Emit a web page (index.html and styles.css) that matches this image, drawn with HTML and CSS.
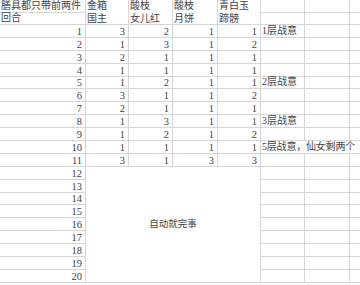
FILE: index.html
```html
<!DOCTYPE html>
<html lang="zh">
<head>
<meta charset="utf-8">
<link rel="stylesheet" href="styles.css">
</head>
<body>
<div class="sheet">
  <div class="c">膳具都只带前两件</div>
  <div class="c h2">金箱<br>国主</div>
  <div class="c h2">酸枝<br>女儿红</div>
  <div class="c h2">酸枝<br>月饼</div>
  <div class="c h2">青白玉<br>蹄髈</div>
  <div class="c"></div><div class="c"></div><div class="c last"></div>
  <div class="c">回合</div>
  <div class="c"></div><div class="c"></div><div class="c last"></div>

  <div class="c n">1</div><div class="c n">3</div><div class="c n">2</div><div class="c n">1</div><div class="c n">1</div><div class="c">1层战意</div><div class="c"></div><div class="c last"></div>
  <div class="c n">2</div><div class="c n">1</div><div class="c n">3</div><div class="c n">1</div><div class="c n">2</div><div class="c"></div><div class="c"></div><div class="c last"></div>
  <div class="c n">3</div><div class="c n">2</div><div class="c n">1</div><div class="c n">1</div><div class="c n">1</div><div class="c"></div><div class="c"></div><div class="c last"></div>
  <div class="c n">4</div><div class="c n">1</div><div class="c n">1</div><div class="c n">1</div><div class="c n">1</div><div class="c"></div><div class="c"></div><div class="c last"></div>
  <div class="c n">5</div><div class="c n">1</div><div class="c n">2</div><div class="c n">1</div><div class="c n">1</div><div class="c">2层战意</div><div class="c"></div><div class="c last"></div>
  <div class="c n">6</div><div class="c n">3</div><div class="c n">1</div><div class="c n">1</div><div class="c n">2</div><div class="c"></div><div class="c"></div><div class="c last"></div>
  <div class="c n">7</div><div class="c n">2</div><div class="c n">1</div><div class="c n">1</div><div class="c n">1</div><div class="c"></div><div class="c"></div><div class="c last"></div>
  <div class="c n">8</div><div class="c n">1</div><div class="c n">3</div><div class="c n">1</div><div class="c n">1</div><div class="c">3层战意</div><div class="c"></div><div class="c last"></div>
  <div class="c n">9</div><div class="c n">1</div><div class="c n">2</div><div class="c n">1</div><div class="c n">2</div><div class="c"></div><div class="c"></div><div class="c last"></div>
  <div class="c n">10</div><div class="c n">1</div><div class="c n">1</div><div class="c n">1</div><div class="c n">1</div><div class="c span3">5层战意，仙女剩两个</div>
  <div class="c n">11</div><div class="c n">3</div><div class="c n">1</div><div class="c n">3</div><div class="c n">3</div><div class="c"></div><div class="c"></div><div class="c last"></div>

  <div class="c n">12</div><div class="c merged">自动就完事</div><div class="c"></div><div class="c"></div><div class="c last"></div>
  <div class="c n">13</div><div class="c"></div><div class="c"></div><div class="c last"></div>
  <div class="c n">14</div><div class="c"></div><div class="c"></div><div class="c last"></div>
  <div class="c n">15</div><div class="c"></div><div class="c"></div><div class="c last"></div>
  <div class="c n">16</div><div class="c"></div><div class="c"></div><div class="c last"></div>
  <div class="c n">17</div><div class="c"></div><div class="c"></div><div class="c last"></div>
  <div class="c n">18</div><div class="c"></div><div class="c"></div><div class="c last"></div>
  <div class="c n">19</div><div class="c"></div><div class="c"></div><div class="c last"></div>
  <div class="c n">20</div><div class="c"></div><div class="c"></div><div class="c last"></div>
</div>
</body>
</html>
```

FILE: styles.css
```css
html, body {
  margin: 0;
  padding: 0;
  background: #ffffff;
}

.sheet {
  display: grid;
  grid-template-columns: 86px 43px 44px 45px 43px 44px 45px 1fr;
  grid-template-rows: 12.5px 12.5px repeat(20, 12.9px);
  width: 360px;
  font-family: "Liberation Serif", "Noto Sans CJK SC", serif;
  font-size: 10px;
  color: #444444;
}

.c {
  box-sizing: border-box;
  border-right: 1px solid #d6d6d6;
  border-bottom: 1px solid #d6d6d6;
  display: flex;
  align-items: flex-end;
  padding: 0 1px 0 1px;
  white-space: nowrap;
  overflow: visible;
  line-height: 12px;
}

.c.last {
  border-right: none;
}

.n {
  justify-content: flex-end;
  padding-right: 3px;
  line-height: 11px;
  font-size: 10.5px;
}

.h2 {
  grid-row: span 2;
  align-items: flex-start;
  line-height: 12.5px;
  padding-top: 0;
}

.span3 {
  grid-column: span 3;
  border-right: none;
  letter-spacing: -0.2px;
}

.merged {
  grid-column: span 4;
  grid-row: span 9;
  justify-content: center;
  align-items: center;
  font-size: 9.5px;
}
```
